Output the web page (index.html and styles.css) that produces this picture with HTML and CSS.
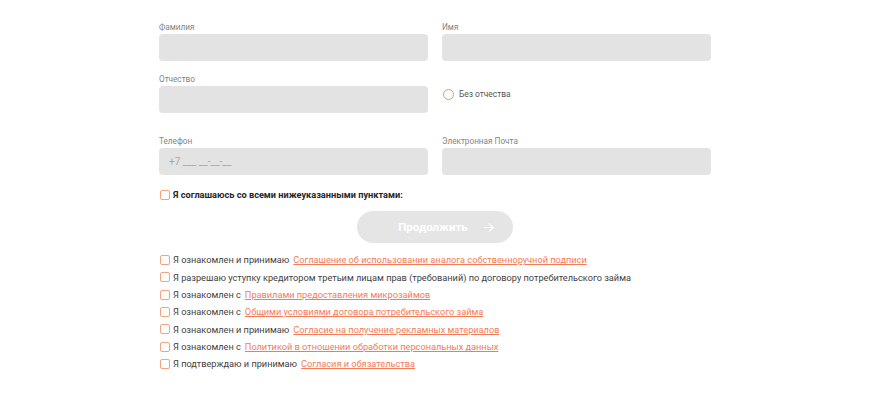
FILE: index.html
```html
<!DOCTYPE html>
<html lang="ru">
<head>
    <meta charset="UTF-8"/>
    <meta name="viewport" content="width=device-width,initial-scale=1.0"/>
    <title>Анкета</title>
    <link rel="stylesheet" href="styles.css">
</head>
<body>
<form class="form">
    <div class="row">
        <div class="field">
            <label class="label">Фамилия</label>
            <div class="input"></div>
        </div>
        <div class="field">
            <label class="label">Имя</label>
            <div class="input"></div>
        </div>
    </div>
    <div class="row">
        <div class="field">
            <label class="label">Отчество</label>
            <div class="input"></div>
        </div>
        <div class="field field-radio">
            <span class="radio"></span>
            <span class="radio-text">Без отчества</span>
        </div>
    </div>
    <div class="row row-wide">
        <div class="field">
            <label class="label">Телефон</label>
            <div class="input placeholder">+7 ___ __-__-__</div>
        </div>
        <div class="field">
            <label class="label">Электронная Почта</label>
            <div class="input"></div>
        </div>
    </div>

    <div class="check check-all">
        <span class="box"></span>
        <span>Я соглашаюсь со всеми нижеуказанными пунктами:</span>
    </div>

    <div class="actions">
        <button type="button" class="btn">Продолжить
            <svg width="11" height="11" viewBox="0 0 12 12" fill="none" stroke="#fff" stroke-width="1.2">
                <path d="M1 6h10M6.5 1.5L11 6l-4.5 4.5"/>
            </svg>
        </button>
    </div>

    <div class="checks">
        <div class="check"><span class="box"></span><span>Я ознакомлен и принимаю</span><a href="#">Соглашение об использовании аналога собственноручной подписи</a></div>
        <div class="check"><span class="box"></span><span>Я разрешаю уступку кредитором третьим лицам прав (требований) по договору потребительского займа</span></div>
        <div class="check"><span class="box"></span><span>Я ознакомлен с</span><a href="#">Правилами предоставления микрозаймов</a></div>
        <div class="check"><span class="box"></span><span>Я ознакомлен с</span><a href="#">Общими условиями договора потребительского займа</a></div>
        <div class="check"><span class="box"></span><span>Я ознакомлен и принимаю</span><a href="#">Согласие на получение рекламных материалов</a></div>
        <div class="check"><span class="box"></span><span>Я ознакомлен с</span><a href="#">Политикой в отношении обработки персональных данных</a></div>
        <div class="check"><span class="box"></span><span>Я подтверждаю и принимаю</span><a href="#">Согласия и обязательства</a></div>
    </div>
</form>
</body>
</html>
```

FILE: styles.css
```css
* {
    margin: 0;
    padding: 0;
    box-sizing: border-box
}

body {
    font-family: Roboto, 'Liberation Sans', sans-serif;
    background: #fff;
    color: #3d3d3d
}

.form {
    width: 552px;
    margin: 0 auto;
    padding-top: 20px
}

.row {
    display: grid;
    grid-template-columns: 1fr 1fr;
    gap: 14px;
    margin-bottom: 11px
}

.row-wide {
    margin-top: 21px
}

.field {
    display: flex;
    flex-direction: column
}

.label {
    font-size: 8.2px;
    line-height: 12px;
    color: #858585;
    margin-top: 1px;
    margin-bottom: 1px
}

.input {
    height: 27px;
    background: #e3e3e3;
    border-radius: 4px;
    font-size: 10px;
    line-height: 27px;
    padding: 0 10px
}

.placeholder {
    color: #a9a9a9
}

.field-radio {
    flex-direction: row;
    align-items: center;
    padding-top: 3px;
    gap: 5px
}

.radio {
    width: 11px;
    height: 11px;
    border: 1.3px solid #f5925f;
    border-radius: 50%;
    margin-left: 1px
}

.radio-text {
    font-size: 8.4px;
    color: #555
}

.check {
    display: flex;
    align-items: center;
    gap: 3px;
    font-size: 9.2px;
    line-height: 17.35px;
    color: #424242;
    white-space: nowrap
}

.check a {
    color: #f47b56;
    margin-left: 1px
}

.box {
    width: 10px;
    height: 10px;
    border: 1.3px solid #f5a27f;
    border-radius: 2px;
    flex: none;
    margin-left: 1px
}

.check-all {
    font-weight: bold;
    color: #262626;
    margin-top: 3px
}

.actions {
    display: flex;
    justify-content: center;
    margin: 8px 0 8px
}

.btn {
    width: 156px;
    height: 32px;
    border: none;
    border-radius: 16px;
    background: #e5e5e5;
    color: #fff;
    font-family: Roboto, 'Liberation Sans', sans-serif;
    font-size: 11.5px;
    font-weight: bold;
    display: flex;
    align-items: center;
    justify-content: center;
    gap: 15px;
    padding-left: 22px
}
```
